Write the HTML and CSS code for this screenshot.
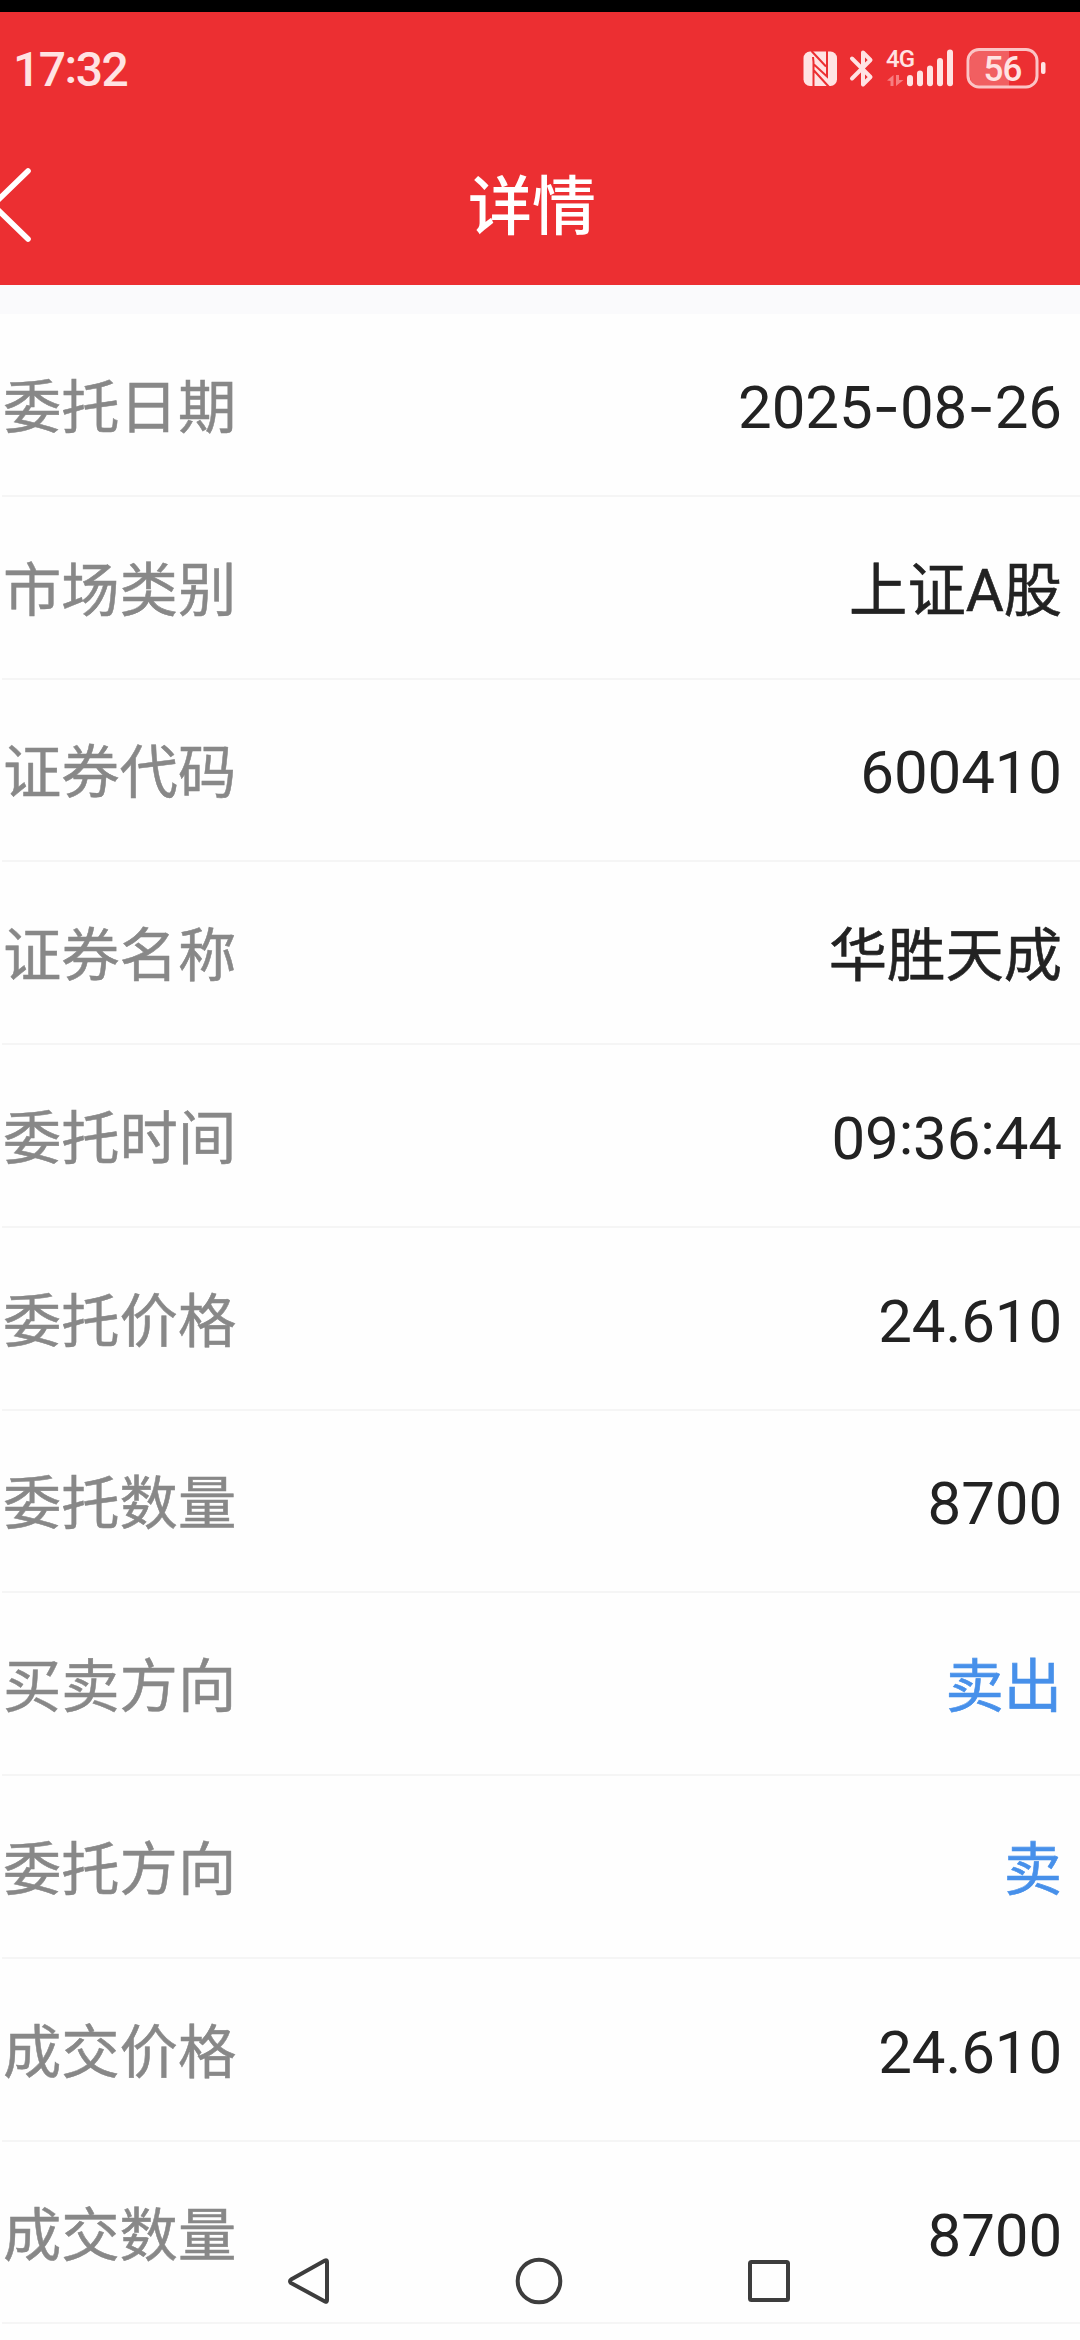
FILE: index.html
```html
<!DOCTYPE html>
<html lang="zh-CN">
<head>
<meta charset="utf-8">
<title>详情</title>
<link rel="stylesheet" href="styles.css">
</head>
<body>
<div class="screen">
  <header class="header">
    <div class="status">
      <span class="clock">17<span class="clock-colon">:</span>32</span>
      <svg class="status-icons" width="250" height="50" viewBox="800 43 250 50">
        <g fill="#ffe3e3">
          <rect x="803.500" y="51.500" width="33.500" height="34.500" rx="6.500"/>
          <rect x="907" y="75" width="6" height="11.300" rx="3"/>
          <rect x="917" y="70.500" width="6" height="15.800" rx="3"/>
          <rect x="927" y="65.500" width="6" height="20.800" rx="3"/>
          <rect x="937" y="58" width="6" height="28.300" rx="3"/>
          <rect x="947" y="49.500" width="6" height="36.800" rx="3"/>
          <rect x="1041" y="62" width="4.500" height="12" rx="2"/>
        </g>
        <path d="M811.500 51L826 66.500M827 50V76.500L814 64.500M813.500 87V62L813 57M813.500 70L829 87" stroke="#ec2f32" stroke-width="2" fill="none"/>
        <path d="M852 58.500L870.500 77 863 84.500V52.500L870.500 60 852 78.500" fill="none" stroke="#ffe3e3" stroke-width="4" stroke-linecap="round" stroke-linejoin="round"/>
        <path d="M887 80.500L893.500 75v11h-3v-5zM896 75h3v5h4.500L896 86z" fill="#f77d80"/>
        <path d="M981 50h28v36h-28q-11 0-11-11V61q0-11 11-11z" fill="#f15f61"/>
        <rect x="968" y="49.500" width="69" height="37.500" rx="11" fill="none" stroke="#fbc4c5" stroke-width="3"/>
        <text class="network" x="886" y="67">4G</text>
        <text class="battery" x="1002.500" y="80.500">56</text>
      </svg>
    </div>
    <div class="titlebar">
      <svg class="back" width="40" height="80" viewBox="0 165 40 80"><path d="M28 171L-7 205 28 239" fill="none" stroke="#fff" stroke-width="5.600" stroke-linecap="round" stroke-linejoin="round"/></svg>
      <h1 class="title">详情</h1>
    </div>
  </header>
  <main class="list">
    <div class="row"><span class="label">委托日期</span><span class="value">2025<span class="dash">-</span>08<span class="dash">-</span>26</span></div>
    <div class="row"><span class="label">市场类别</span><span class="value cjk">上证A股</span></div>
    <div class="row"><span class="label">证券代码</span><span class="value">600410</span></div>
    <div class="row"><span class="label">证券名称</span><span class="value cjk">华胜天成</span></div>
    <div class="row"><span class="label">委托时间</span><span class="value">09<span class="colon">:</span>36<span class="colon">:</span>44</span></div>
    <div class="row"><span class="label">委托价格</span><span class="value">24.610</span></div>
    <div class="row"><span class="label">委托数量</span><span class="value">8700</span></div>
    <div class="row"><span class="label">买卖方向</span><span class="value cjk sell">卖出</span></div>
    <div class="row"><span class="label">委托方向</span><span class="value cjk sell">卖</span></div>
    <div class="row"><span class="label">成交价格</span><span class="value">24.610</span></div>
    <div class="row"><span class="label">成交数量</span><span class="value">8700</span></div>
  </main>
  <nav class="navbar">
    <svg width="46" height="50" viewBox="286 2256 46 50"><path d="M325 2260.500Q327 2259.500 327 2262V2300Q327 2302.500 325 2301.500L291 2283Q289 2281 291 2279.500Z"/></svg>
    <svg width="50" height="50" viewBox="515 2256 50 50"><circle cx="540" cy="2281" r="21.300"/></svg>
    <svg width="46" height="50" viewBox="746 2256 46 50"><rect x="750" y="2262" width="38" height="38" rx="1.500"/></svg>
  </nav>
</div>
</body>
</html>
```
FILE: styles.css
```css
* { box-sizing: border-box; }
body { margin: 0; background: #fefefe; font-family: Roboto, "Noto Sans CJK SC", sans-serif; }
.screen { position: relative; width: 1080px; height: 2340px; overflow: hidden; background: #fefefe; }
.header { height: 285px; border-top: 12px solid #000; background: #ec2f32; color: #fff; }
.status { display: flex; justify-content: space-between; height: 113px; padding: 31px 30px 0 13px; }
.clock { font-size: 48px; font-weight: 500; line-height: 54px; letter-spacing: -1.500px; color: #ffe3e3; }
.clock-colon { line-height: 0; vertical-align: 3px; }
.network { font: 500 24px Roboto, sans-serif; letter-spacing: -1px; fill: #ffe3e3; }
.battery { font: 500 35px Roboto, sans-serif; text-anchor: middle; letter-spacing: -1px; fill: #ffe3e3; }
.titlebar { display: grid; grid-template-columns: 40px 1fr 56px; align-items: center; height: 160px; }
.title { margin: 0; padding-top: 6px; font-size: 64px; line-height: 80px; font-weight: 500; text-align: center; }
.list { border-top: 29px solid #fafafc; }
.row { display: flex; justify-content: space-between; align-items: center; height: 182.770px; margin-left: 2px; padding: 7px 18px 0 1px; border-bottom: 2px solid #f5f5f5; }
.label { font-size: 58.300px; line-height: 80px; color: #888; -webkit-text-stroke: 0.500px #888; }
.value { font-size: 60px; line-height: 80px; letter-spacing: -0.100px; color: #222; }
.cjk { font-size: 58.300px; letter-spacing: 0; -webkit-text-stroke: 0.600px currentColor; }
.sell { color: #4790ea; }
.dash { font-family: Inter, sans-serif; line-height: 0; }
.colon { line-height: 0; vertical-align: 5px; }
.navbar { position: absolute; left: 286px; top: 2256px; width: 506px; display: flex; justify-content: space-between; }
.navbar svg { fill: none; stroke: #3d3d3d; stroke-width: 4; stroke-linejoin: round; }
```
